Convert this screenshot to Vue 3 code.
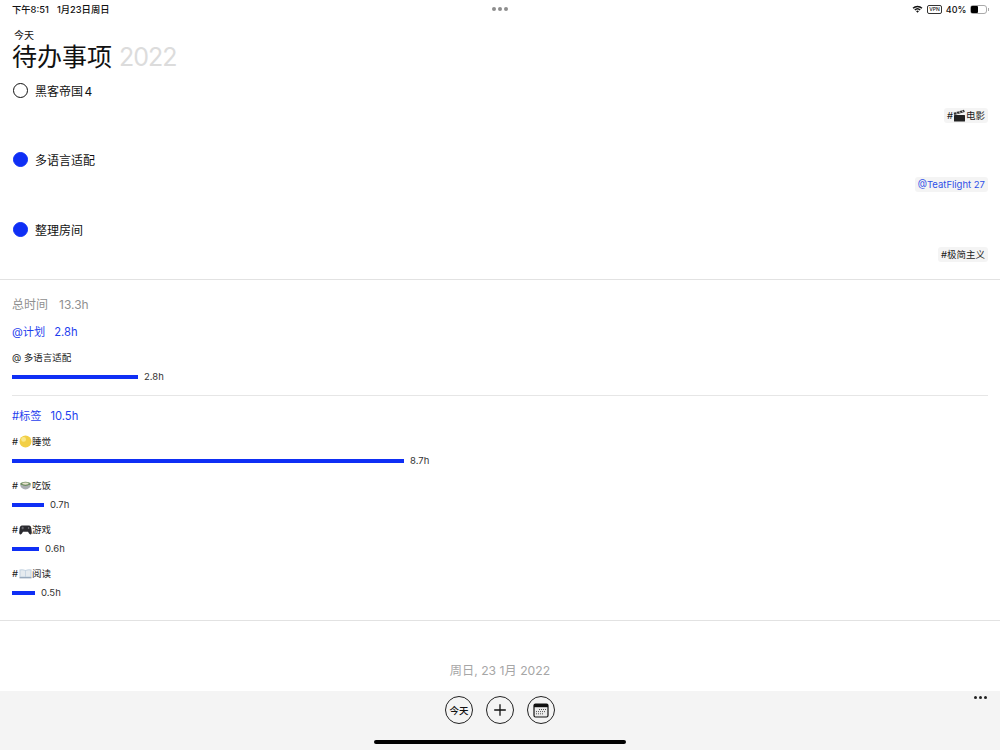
<script setup>
const tasks = [
  { name: "黑客帝国 4", done: false, tag: "#", emoji: "clapper", tagName: "电影" },
  { name: "多语言适配", done: true, tag: "@TeatFlight 27", blue: true },
  { name: "整理房间", done: true, tag: "#极简主义" },
]

const tagStats = [
  { name: "睡觉", emoji: "moon", hours: 8.7, width: 392 },
  { name: "吃饭", emoji: "bowl", hours: 0.7, width: 32 },
  { name: "游戏", emoji: "pad", hours: 0.6, width: 27 },
  { name: "阅读", emoji: "book", hours: 0.5, width: 23 },
]
</script>

<template>
  <div class="page">
    <header class="status">
      <div class="status-left">
        <span>下午8:51</span>
        <span>1月23日周日</span>
      </div>
      <div class="status-dots"><i></i><i></i><i></i></div>
      <div class="status-right">
        <svg width="11" height="8" viewBox="0 0 12 9">
          <path d="M0.4 3 A8 8 0 0 1 11.6 3 L10.4 4.2 A6.3 6.3 0 0 0 1.6 4.2 Z" fill="#111" />
          <path d="M2.4 5 A5.2 5.2 0 0 1 9.6 5 L8.4 6.2 A3.5 3.5 0 0 0 3.6 6.2 Z" fill="#111" />
          <path d="M4.4 7 A2.3 2.3 0 0 1 7.6 7 L6 8.8 Z" fill="#111" />
        </svg>
        <span class="vpn">VPN</span>
        <span class="percent">40%</span>
        <span class="battery"><span class="battery-fill"></span></span>
      </div>
    </header>

    <section class="head">
      <div class="today">今天</div>
      <h1>待办事项 <span>2022</span></h1>
    </section>

    <section class="tasks">
      <div v-for="task in tasks" :key="task.name" class="task">
        <div class="task-row">
          <span class="check" :class="{ done: task.done }"></span>
          <span class="task-name">{{ task.name }}</span>
        </div>
        <div class="task-tag-row">
          <span class="tag" :class="{ blue: task.blue }">
            {{ task.tag }}
            <svg v-if="task.emoji === 'clapper'" width="13" height="13" viewBox="0 0 13 13">
              <rect x="1" y="6" width="11" height="6.5" rx="0.5" fill="#222" />
              <path d="M0.6 3.8 L11 0.8 L11.8 3 L1.3 6 Z" fill="#333" />
              <path d="M3 3.1 L4.4 5.1 M6 2.2 L7.4 4.2 M9 1.4 L10.2 3.3" stroke="#ddd" stroke-width="0.9" />
            </svg>
            <template v-if="task.tagName">{{ task.tagName }}</template>
          </span>
        </div>
      </div>
    </section>

    <section class="stats">
      <div class="total">总时间<span>13.3h</span></div>

      <div class="group-title">@计划<span>2.8h</span></div>
      <div class="stat">
        <div class="stat-name">@ 多语言适配</div>
        <div class="stat-bar">
          <span class="bar" :style="{ width: '126px' }"></span>
          <span class="hours">2.8h</span>
        </div>
      </div>

      <div class="stats-line"></div>

      <div class="group-title">#标签<span>10.5h</span></div>
      <div v-for="item in tagStats" :key="item.name" class="stat">
        <div class="stat-name">
          #<svg v-if="item.emoji === 'moon'" width="13" height="13" viewBox="0 0 13 13">
            <circle cx="6.5" cy="6.5" r="6" fill="#f2cf45" />
            <circle cx="4.6" cy="4.4" r="2.4" fill="#f9e88a" />
          </svg>
          <svg v-else-if="item.emoji === 'bowl'" width="13" height="13" viewBox="0 0 13 13">
            <ellipse cx="6.5" cy="5" rx="5.4" ry="2.2" fill="#6f8f63" />
            <ellipse cx="6.5" cy="4.6" rx="3.2" ry="1.1" fill="#e9e2cf" />
            <path d="M1 5.6 Q6.5 8.4 12 5.6 Q11 10.4 6.5 10.4 Q2 10.4 1 5.6 Z" fill="#a9adb1" />
          </svg>
          <svg v-else-if="item.emoji === 'pad'" width="13" height="13" viewBox="0 0 13 13">
            <path d="M3 2.4 H10 Q12 2.4 12.4 5.4 L12.8 9.8 Q12.8 11.6 11.2 11.4 Q10 11 9 8.8 H4 Q3 11 1.8 11.4 Q0.2 11.6 0.2 9.8 L0.6 5.4 Q1 2.4 3 2.4 Z" fill="#2b2b30" />
            <circle cx="9.6" cy="5" r="0.8" fill="#8a8a90" />
            <path d="M2.4 5 H5 M3.7 3.7 V6.3" stroke="#77777d" stroke-width="0.8" />
          </svg>
          <svg v-else width="13" height="13" viewBox="0 0 13 13">
            <path d="M0.5 2.6 Q3.5 1.8 6.5 3 Q9.5 1.8 12.5 2.6 V10.6 H0.5 Z" fill="#c3d2e0" />
            <path d="M1.5 3.4 Q4 3 6.1 3.8 V9.6 H1.5 Z M6.9 3.8 Q9 3 11.5 3.4 V9.6 H6.9 Z" fill="#e6ebef" />
            <path d="M0.5 10.8 H12.5" stroke="#6f86a0" stroke-width="0.9" />
          </svg>{{ item.name }}
        </div>
        <div class="stat-bar">
          <span class="bar" :style="{ width: item.width + 'px' }"></span>
          <span class="hours">{{ item.hours }}h</span>
        </div>
      </div>
    </section>

    <div class="date">周日, 23 1月 2022</div>

    <footer class="toolbar">
      <div class="more"><i></i><i></i><i></i></div>
      <div class="buttons">
        <button class="round today-btn">今天</button>
        <button class="round">
          <svg width="16" height="16" viewBox="0 0 16 16">
            <path d="M8 2.2 V13.8 M2.2 8 H13.8" stroke="#111" stroke-width="1.3" />
          </svg>
        </button>
        <button class="round">
          <svg width="16" height="15" viewBox="0 0 16 15">
            <rect x="1" y="1" width="14" height="13" rx="1.5" fill="#ececec" stroke="#111" stroke-width="1.2" />
            <rect x="1" y="1" width="14" height="3.2" fill="#111" />
            <path d="M6 6.5 H13 M3 8.6 H13 M3 10.8 H10" stroke="#555" stroke-width="1" stroke-dasharray="1 1" />
          </svg>
        </button>
      </div>
      <div class="home-bar"></div>
    </footer>
  </div>
</template>

<style>
html, body {
  margin: 0;
  background: #fff;
}
</style>

<style scoped>
.page {
  width: 1000px;
  height: 750px;
  overflow: hidden;
  display: flex;
  flex-direction: column;
  background: #fff;
  color: #111;
  font-family: Inter, "Noto Sans CJK SC", sans-serif;
}

.status {
  height: 18px;
  flex: none;
  display: flex;
  justify-content: space-between;
  align-items: center;
  padding: 0 11px 0 12px;
  font-size: 9.3px;
  font-weight: 500;
  position: relative;
}

.status-left {
  display: flex;
  gap: 8px;
}

.status-dots {
  position: absolute;
  left: 492px;
  top: 7px;
  display: flex;
  gap: 2px;
}

.status-dots i {
  width: 4px;
  height: 4px;
  border-radius: 50%;
  background: #8e8e8e;
}

.status-right {
  display: flex;
  align-items: center;
  gap: 3.5px;
}

.vpn {
  border: 1px solid #333;
  border-radius: 2px;
  font-size: 5px;
  line-height: 7px;
  padding: 0 1.5px;
}

.percent {
  font-size: 9px;
}

.battery {
  width: 17px;
  height: 9px;
  box-sizing: border-box;
  border: 1px solid #aaa;
  border-radius: 3px;
  margin-right: 2px;
  display: flex;
  position: relative;
}

.battery::after {
  content: "";
  position: absolute;
  right: -3px;
  top: 2px;
  width: 1.5px;
  height: 3px;
  background: #aaa;
}

.battery-fill {
  width: 7px;
  background: #000;
  border-radius: 1px;
}

.head {
  padding: 11px 12px 0;
  flex: none;
}

.today {
  font-size: 10px;
  line-height: 13px;
  padding-left: 2px;
}

h1 {
  margin: 3px 0 0;
  font-size: 25px;
  line-height: 25px;
  font-weight: 400;
  height: 25px;
}

h1 span {
  color: #dcdcdc;
  letter-spacing: -1px;
}

.tasks {
  flex: none;
  height: 199px;
  border-bottom: 1px solid #e2e2e2;
  padding-top: 10px;
}

.task {
  height: 69.5px;
  padding: 0 12px;
}

.task-row {
  display: flex;
  align-items: center;
  gap: 7px;
  height: 20px;
  padding-left: 1px;
}

.check {
  width: 15px;
  height: 15px;
  box-sizing: border-box;
  border: 1.7px solid #111;
  border-radius: 50%;
}

.check.done {
  background: #0f2ff5;
  border-color: #0f2ff5;
}

.task-name {
  font-size: 12px;
  word-spacing: -2px;
}

.task-tag-row {
  display: flex;
  justify-content: flex-end;
  margin-top: 7.5px;
}

.tag {
  display: flex;
  align-items: center;
  height: 15px;
  padding: 0 3px;
  background: #f4f4f4;
  border-radius: 3px;
  font-size: 9.5px;
  color: #222;
}

.tag.blue {
  color: #2f50e8;
}

.stats {
  flex: none;
  height: 341px;
  box-sizing: border-box;
  border-bottom: 1px solid #e2e2e2;
  padding: 17px 12px 0;
}

.total {
  font-size: 12px;
  line-height: 16px;
  color: #8f8f8f;
}

.total span {
  margin-left: 11px;
}

.group-title span {
  margin-left: 9px;
}

.group-title {
  font-size: 11.2px;
  line-height: 16px;
  color: #1f3fee;
  margin-top: 11px;
}

.stat {
  margin-top: 11px;
}

.stat + .stat {
  margin-top: 12px;
}

.stat-name {
  display: flex;
  align-items: center;
  font-size: 9.5px;
  line-height: 13px;
  height: 13px;
  color: #222;
}

.stat-name svg {
  margin: 0 0.5px;
}

.stat-bar {
  display: flex;
  align-items: center;
  gap: 6px;
  height: 13px;
  margin-top: 6px;
}

.bar {
  height: 4px;
  background: #0f2ff5;
}

.hours {
  font-size: 9.5px;
  color: #333;
}

.stats-line {
  height: 1px;
  background: #e6e6e6;
  margin: 12px 0 12px;
}

.date {
  flex: none;
  height: 70px;
  box-sizing: border-box;
  padding-top: 40px;
  text-align: center;
  font-size: 12.2px;
  line-height: 19px;
  color: #a6a6a6;
}

.toolbar {
  flex: 1;
  background: #f4f4f4;
  position: relative;
  display: flex;
  flex-direction: column;
  align-items: center;
}

.buttons {
  display: flex;
  gap: 13px;
  margin-top: 5px;
}

.round {
  width: 28px;
  height: 28px;
  box-sizing: border-box;
  border: 1.2px solid #222;
  border-radius: 50%;
  background: transparent;
  padding: 0;
  display: flex;
  align-items: center;
  justify-content: center;
  font-family: inherit;
  color: #111;
}

.today-btn {
  font-size: 9.5px;
  font-weight: 500;
}

.more {
  position: absolute;
  top: 5px;
  right: 13px;
  display: flex;
  gap: 2px;
}

.more i {
  width: 3px;
  height: 3px;
  border-radius: 50%;
  background: #222;
}

.home-bar {
  position: absolute;
  left: 374px;
  bottom: 6px;
  width: 252px;
  height: 4px;
  border-radius: 2px;
  background: #000;
}
</style>
